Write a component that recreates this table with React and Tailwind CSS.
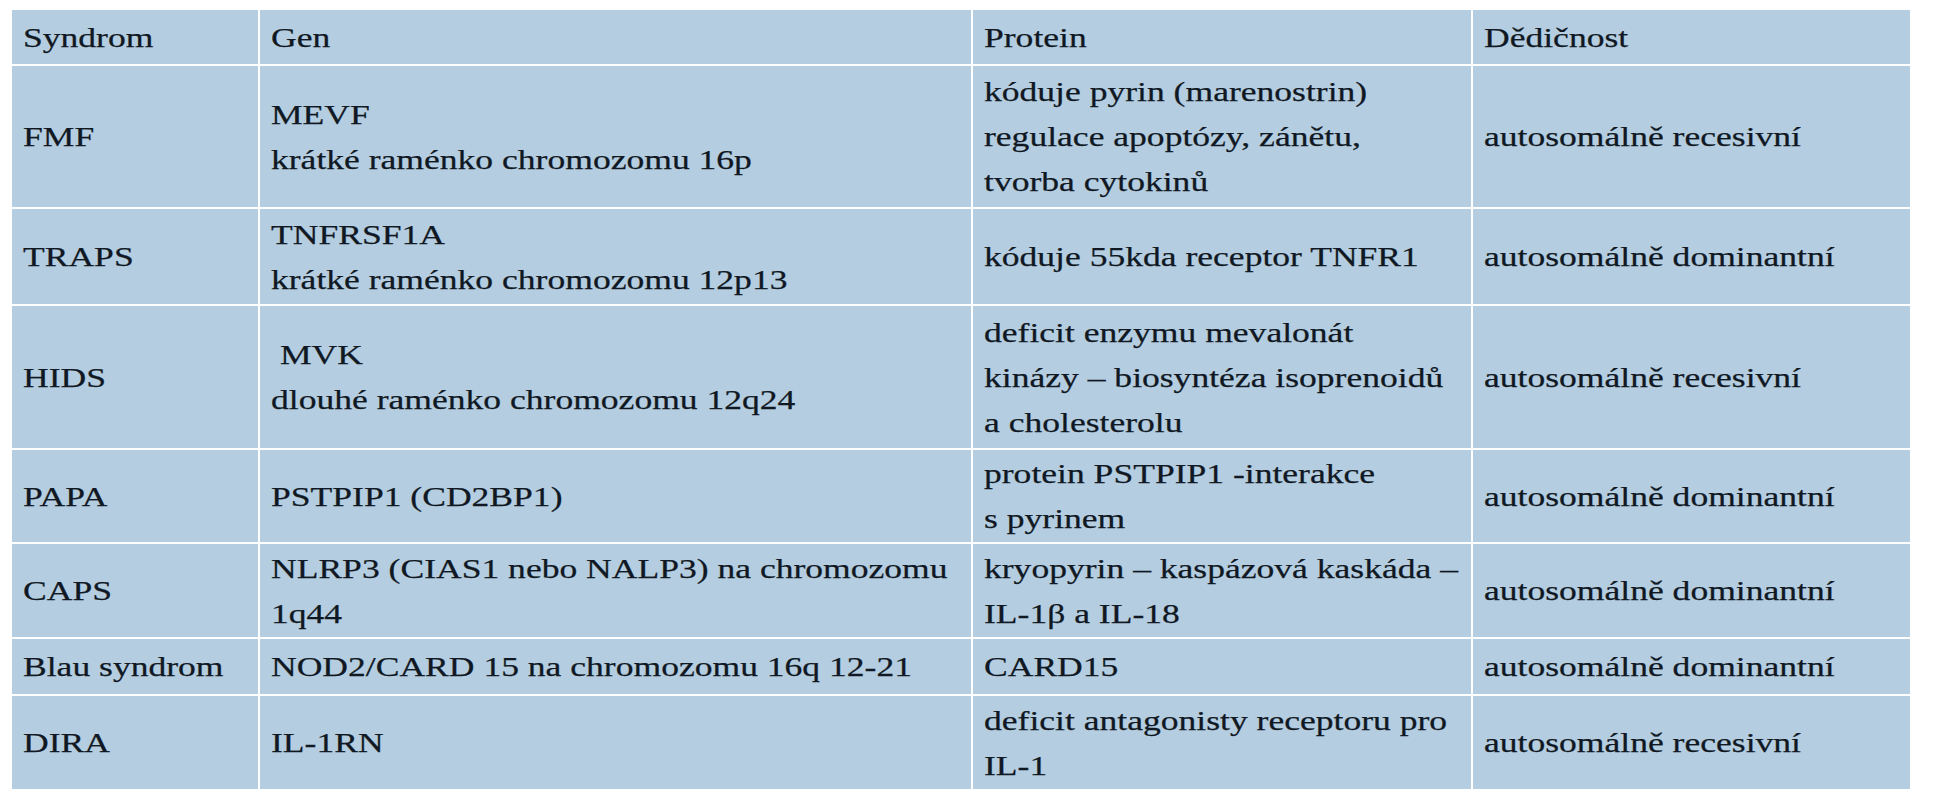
import React from "react";

const rows = [
  { s: ["Syndrom"], g: ["Gen"], p: ["Protein"], d: ["Dědičnost"] },
  {
    s: ["FMF"],
    g: ["MEVF", "krátké raménko chromozomu 16p"],
    p: ["kóduje pyrin (marenostrin)", "regulace apoptózy, zánětu,", "tvorba cytokinů"],
    d: ["autosomálně recesivní"],
  },
  {
    s: ["TRAPS"],
    g: ["TNFRSF1A", "krátké raménko chromozomu 12p13"],
    p: ["kóduje 55kda receptor TNFR1"],
    d: ["autosomálně dominantní"],
  },
  {
    s: ["HIDS"],
    g: ["\u00a0MVK", "dlouhé raménko chromozomu 12q24"],
    p: ["deficit enzymu mevalonát", "kinázy – biosyntéza isoprenoidů", "a cholesterolu"],
    d: ["autosomálně recesivní"],
  },
  {
    s: ["PAPA"],
    g: ["PSTPIP1 (CD2BP1)"],
    p: ["protein PSTPIP1 -interakce", "s pyrinem"],
    d: ["autosomálně dominantní"],
  },
  {
    s: ["CAPS"],
    g: ["NLRP3 (CIAS1 nebo NALP3) na chromozomu", "1q44"],
    p: ["kryopyrin – kaspázová kaskáda –", "IL-1β a IL-18"],
    d: ["autosomálně dominantní"],
  },
  {
    s: ["Blau syndrom"],
    g: ["NOD2/CARD 15 na chromozomu 16q 12-21"],
    p: ["CARD15"],
    d: ["autosomálně dominantní"],
  },
  {
    s: ["DIRA"],
    g: ["IL-1RN"],
    p: ["deficit antagonisty receptoru pro", "IL-1"],
    d: ["autosomálně recesivní"],
  },
];

function Cell({ lines }) {
  return (
    <div className="bg-[#b4cde0] flex flex-col justify-center px-[11px] overflow-hidden">
      {lines.map((l, i) => (
        <div
          key={i}
          className="whitespace-pre origin-left scale-x-[1.27] leading-[45px] [-webkit-text-stroke:0.25px_#101823]"
        >
          {l}
        </div>
      ))}
    </div>
  );
}

export default function App() {
  return (
    <div className="w-[1943px] h-[800px] bg-white pt-[10px] pl-[12px]">
      <div
        className="grid w-[1898px] gap-[2px] bg-white grid-cols-[246px_711px_498px_437px] grid-rows-[54px_141px_95px_142px_92px_93px_55px_93px] text-[28px] text-[#101823]"
        style={{ fontFamily: '"Liberation Serif", "Times New Roman", serif' }}
      >
        {rows.map((r, i) => (
          <React.Fragment key={i}>
            <Cell lines={r.s} />
            <Cell lines={r.g} />
            <Cell lines={r.p} />
            <Cell lines={r.d} />
          </React.Fragment>
        ))}
      </div>
    </div>
  );
}
